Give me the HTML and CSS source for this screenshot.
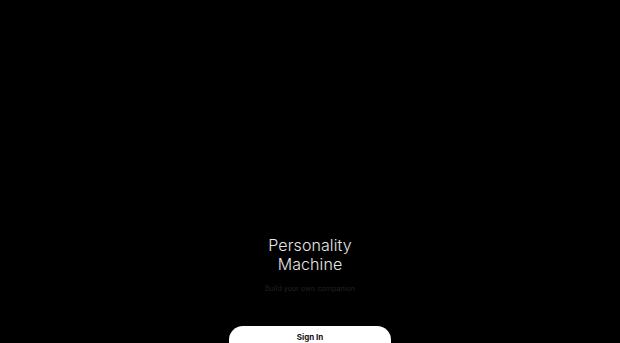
FILE: index.html
```html
<!DOCTYPE html>
<html lang="en">

<head>
    <meta charset="UTF-8">
    <meta name="viewport" content="width=device-width, initial-scale=1.0">
    <title>Personality Machine</title>
    <link rel="stylesheet" href="styles.css">
</head>

<body>
    <div class="landing">
        <h1 class="title">Personality<br>Machine</h1>
        <p class="tagline">Build your own companion</p>
        <button class="signin-btn">Sign In</button>
    </div>
</body>

</html>
```

FILE: styles.css
```css
html,
body {
    margin: 0;
    padding: 0;
    background-color: #000;
    height: 100%;
    overflow: hidden;
}

body {
    font-family: Inter, "Liberation Sans", Arial, sans-serif;
}

.landing {
    display: flex;
    flex-direction: column;
    align-items: center;
    padding-top: 236px;
}

.title {
    margin: 0;
    font-size: 16px;
    font-weight: 300;
    line-height: 19px;
    color: #e6e6e6;
    text-align: center;
    letter-spacing: 0.1px;
}

.tagline {
    margin: 10px 0 0;
    font-size: 7px;
    line-height: 10px;
    color: #232323;
    letter-spacing: 0.1px;
}

.signin-btn {
    margin-top: 32px;
    width: 162px;
    height: 36px;
    border: none;
    border-radius: 14px;
    background-color: #fff;
    color: #111;
    font-family: inherit;
    font-size: 8px;
    line-height: 10px;
    font-weight: 700;
    padding: 6px 0 0;
    display: flex;
    justify-content: center;
    align-items: flex-start;
    cursor: pointer;
}
```
